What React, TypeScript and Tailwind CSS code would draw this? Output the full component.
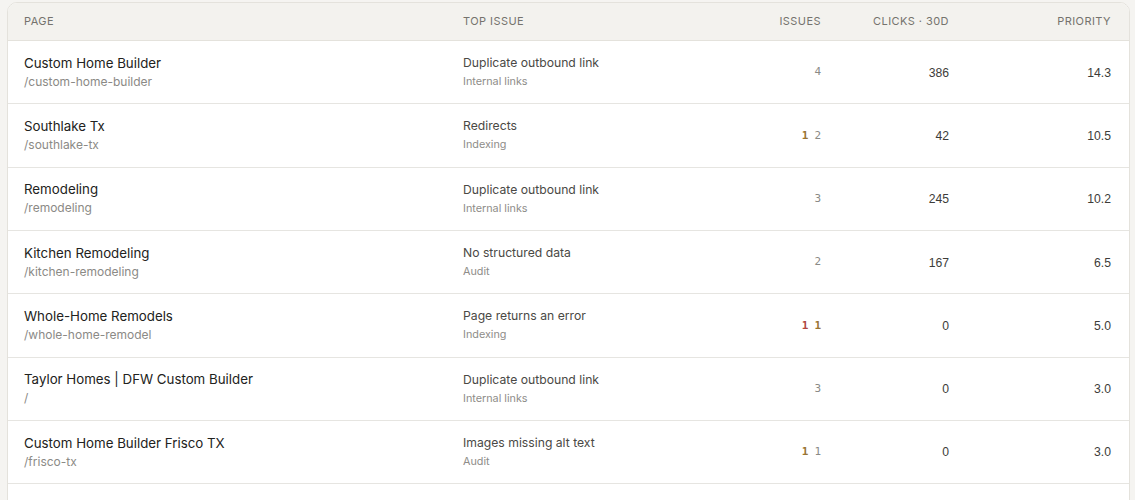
import React from "react";

type Row = {
  title: string;
  path: string;
  issue: string;
  cat: string;
  issues: { v: string; c: "red" | "amber" | "gray" }[];
  clicks: string;
  priority: string;
};

const rows: Row[] = [
  { title: "Custom Home Builder", path: "/custom-home-builder", issue: "Duplicate outbound link", cat: "Internal links", issues: [{ v: "4", c: "gray" }], clicks: "386", priority: "14.3" },
  { title: "Southlake Tx", path: "/southlake-tx", issue: "Redirects", cat: "Indexing", issues: [{ v: "1", c: "amber" }, { v: "2", c: "gray" }], clicks: "42", priority: "10.5" },
  { title: "Remodeling", path: "/remodeling", issue: "Duplicate outbound link", cat: "Internal links", issues: [{ v: "3", c: "gray" }], clicks: "245", priority: "10.2" },
  { title: "Kitchen Remodeling", path: "/kitchen-remodeling", issue: "No structured data", cat: "Audit", issues: [{ v: "2", c: "gray" }], clicks: "167", priority: "6.5" },
  { title: "Whole-Home Remodels", path: "/whole-home-remodel", issue: "Page returns an error", cat: "Indexing", issues: [{ v: "1", c: "red" }, { v: "1", c: "amber" }], clicks: "0", priority: "5.0" },
  { title: "Taylor Homes | DFW Custom Builder", path: "/", issue: "Duplicate outbound link", cat: "Internal links", issues: [{ v: "3", c: "gray" }], clicks: "0", priority: "3.0" },
  { title: "Custom Home Builder Frisco TX", path: "/frisco-tx", issue: "Images missing alt text", cat: "Audit", issues: [{ v: "1", c: "amber" }, { v: "1", c: "gray" }], clicks: "0", priority: "3.0" },
];

const colorCls = {
  red: "text-[#b0473f] font-bold",
  amber: "text-[#9a7432] font-bold",
  gray: "text-[#8a8a86]",
};

const grid = "grid grid-cols-[439px_290px_100px_112px_1fr]";

export default function App() {
  return (
    <div className="h-[500px] overflow-hidden bg-[#f5f4f1] pl-[7px] pr-[5px] pt-[2px] font-['Inter',sans-serif]">
      <div className="rounded-t-[10px] border border-[#e4e2dc] bg-white overflow-hidden">
        <div className={`${grid} h-[38px] items-center bg-[#f3f2ee] border-b border-[#e4e2dc] text-[11px] text-[#75736d] uppercase tracking-[0.04em]`}>
          <div className="pl-4">Page</div>
          <div className="pl-4">Top issue</div>
          <div className="text-right pr-4">Issues</div>
          <div className="text-right">Clicks · 30d</div>
          <div className="text-right pr-[18px]">Priority</div>
        </div>
        {rows.map((r, i) => (
          <div key={i} className={`${grid} h-[63.33px] items-center border-b border-[#e6e5e1]`}>
            <div className="pl-4 pt-[0px] flex flex-col">
              <span className="text-[13.3px] leading-[18px] text-[#222220]">{r.title}</span>
              <span className="text-[12px] leading-[19px] text-[#8b8a86]">{r.path}</span>
            </div>
            <div className="pl-4 pt-[1px] flex flex-col">
              <span className="text-[12.2px] leading-[18px] text-[#4a4945]">{r.issue}</span>
              <span className="text-[10.8px] leading-[19px] text-[#8e8d89]">{r.cat}</span>
            </div>
            <div className="pr-4 pt-[1px] flex justify-end gap-[6px] font-['DejaVu_Sans_Mono',monospace] text-[11px]">
              {r.issues.map((x, j) => (
                <span key={j} className={colorCls[x.c]}>{x.v}</span>
              ))}
            </div>
            <div className="text-right pt-[1px] text-[12.2px] text-[#3d3c39] font-['Liberation_Sans',sans-serif]">{r.clicks}</div>
            <div className="text-right pt-[1px] pr-[18px] text-[12.2px] text-[#3d3c39] font-['Liberation_Sans',sans-serif]">{r.priority}</div>
          </div>
        ))}
        <div className="h-[40px]" />
      </div>
    </div>
  );
}
